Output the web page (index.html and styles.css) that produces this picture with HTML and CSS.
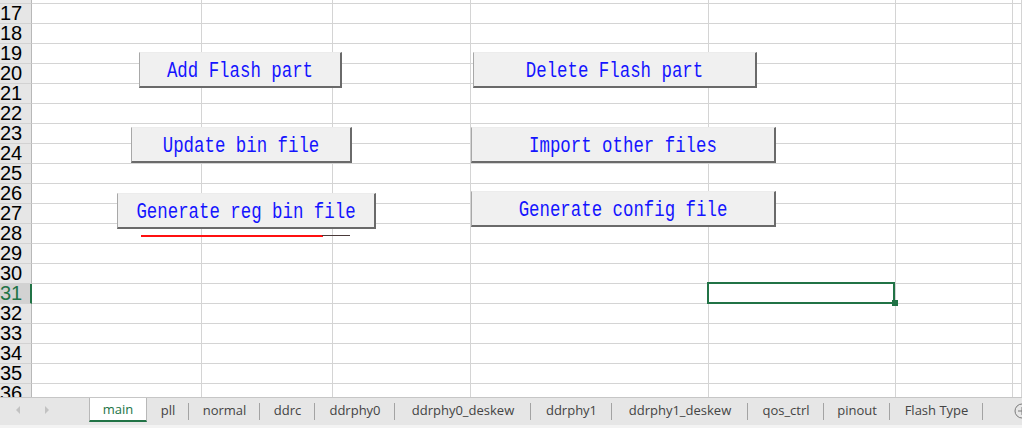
FILE: index.html
```html
<!DOCTYPE html>
<html>
<head>
<meta charset="utf-8">
<link rel="stylesheet" href="styles.css">
</head>
<body>
<div class="app">
  <div class="sheet">
    <div class="row top"><div class="hd"></div><div></div><div></div><div></div><div></div><div></div><div></div><div></div></div>
    <div class="row"><div class="hd">17</div><div></div><div></div><div></div><div></div><div></div><div></div><div></div></div>
    <div class="row"><div class="hd">18</div><div></div><div></div><div></div><div></div><div></div><div></div><div></div></div>
    <div class="row"><div class="hd">19</div><div></div><div></div><div></div><div></div><div></div><div></div><div></div></div>
    <div class="row"><div class="hd">20</div><div></div><div></div><div></div><div></div><div></div><div></div><div></div></div>
    <div class="row"><div class="hd">21</div><div></div><div></div><div></div><div></div><div></div><div></div><div></div></div>
    <div class="row"><div class="hd">22</div><div></div><div></div><div></div><div></div><div></div><div></div><div></div></div>
    <div class="row"><div class="hd">23</div><div></div><div></div><div></div><div></div><div></div><div></div><div></div></div>
    <div class="row"><div class="hd">24</div><div></div><div></div><div></div><div></div><div></div><div></div><div></div></div>
    <div class="row"><div class="hd">25</div><div></div><div></div><div></div><div></div><div></div><div></div><div></div></div>
    <div class="row"><div class="hd">26</div><div></div><div></div><div></div><div></div><div></div><div></div><div></div></div>
    <div class="row"><div class="hd">27</div><div></div><div></div><div></div><div></div><div></div><div></div><div></div></div>
    <div class="row"><div class="hd">28</div><div></div><div></div><div></div><div></div><div></div><div></div><div></div></div>
    <div class="row"><div class="hd">29</div><div></div><div></div><div></div><div></div><div></div><div></div><div></div></div>
    <div class="row"><div class="hd">30</div><div></div><div></div><div></div><div></div><div></div><div></div><div></div></div>
    <div class="row"><div class="hd sel">31</div><div></div><div></div><div></div><div></div><div class="cell-sel"></div><div></div><div></div></div>
    <div class="row"><div class="hd">32</div><div></div><div></div><div></div><div></div><div></div><div></div><div></div></div>
    <div class="row"><div class="hd">33</div><div></div><div></div><div></div><div></div><div></div><div></div><div></div></div>
    <div class="row"><div class="hd">34</div><div></div><div></div><div></div><div></div><div></div><div></div><div></div></div>
    <div class="row"><div class="hd">35</div><div></div><div></div><div></div><div></div><div></div><div></div><div></div></div>
    <div class="row"><div class="hd">36</div><div></div><div></div><div></div><div></div><div></div><div></div><div></div></div>

    <div class="shapes">
      <div class="btn b-add"><span>Add Flash part</span></div>
      <div class="btn b-del"><span>Delete Flash part</span></div>
      <div class="btn b-upd"><span>Update bin file</span></div>
      <div class="btn b-imp"><span>Import other files</span></div>
      <div class="btn b-gen"><span>Generate reg bin file</span></div>
      <div class="btn b-cfg"><span>Generate config file</span></div>
      <div class="ink ink-red"></div>
      <div class="ink ink-dark"></div>
    </div>
  </div>

  <div class="tabbar">
    <div class="nav">
      <svg class="arr" width="6" height="8" viewBox="0 0 6 8"><path d="M5 0 L1 4 L5 8 Z" fill="#c2c2c2"/></svg>
      <svg class="arr" width="6" height="8" viewBox="0 0 6 8"><path d="M1 0 L5 4 L1 8 Z" fill="#c2c2c2"/></svg>
    </div>
    <div class="tab active t-main">main</div>
    <div class="tab t-pll">pll</div>
    <div class="tab t-normal">normal</div>
    <div class="tab t-ddrc">ddrc</div>
    <div class="tab t-phy0">ddrphy0</div>
    <div class="tab t-desk0">ddrphy0_deskew</div>
    <div class="tab t-phy1">ddrphy1</div>
    <div class="tab t-desk1">ddrphy1_deskew</div>
    <div class="tab t-qos">qos_ctrl</div>
    <div class="tab t-pinout">pinout</div>
    <div class="tab t-flash">Flash Type</div>
    <svg class="add" width="16" height="16" viewBox="0 0 16 16"><circle cx="8" cy="8" r="7" fill="none" stroke="#7a7a7a" stroke-width="1"/><path d="M4 8 H12 M8 4 V12" stroke="#7a7a7a" stroke-width="1"/></svg>
  </div>
</div>
</body>
</html>
```

FILE: styles.css
```css
html, body {
  margin: 0;
  padding: 0;
  background: #ffffff;
}
body {
  width: 1022px;
  height: 428px;
  overflow: hidden;
}
.app {
  display: flex;
  flex-direction: column;
  width: 1022px;
  height: 428px;
}
.sheet {
  position: relative;
  height: 397px;
  overflow: hidden;
  flex: none;
}
.row {
  display: grid;
  grid-template-columns: 32px 170px 131px 138px 238px 187px 117px 1fr;
  height: 20px;
}
.row.top {
  height: 4px;
}
.row > div {
  box-sizing: border-box;
  border-right: 1px solid #d4d4d4;
  border-bottom: 1px solid #d4d4d4;
}
.row > .hd {
  background: #e6e6e6;
  border-right-color: #b8b8b8;
  border-bottom-color: #d2d2d2;
  font-family: "Liberation Sans", Arial, sans-serif;
  font-size: 20px;
  line-height: 19px;
  color: #000;
  white-space: nowrap;
}
.row.top > .hd {
  overflow: hidden;
}
.row > .hd.sel {
  background: #d2d2d2;
  color: #217346;
  border-right: 2px solid #217346;
}
.row > .cell-sel {
  position: relative;
}
.cell-sel::after {
  content: "";
  position: absolute;
  left: -2px;
  top: -2px;
  right: 0;
  bottom: -1px;
  border: 2px solid #217346;
}
.cell-sel::before {
  content: "";
  position: absolute;
  right: -3px;
  bottom: -3px;
  width: 6px;
  height: 6px;
  background: #217346;
  z-index: 1;
}

.shapes {
  position: absolute;
  inset: 0;
}
.btn {
  position: absolute;
  box-sizing: border-box;
  height: 36px;
  display: flex;
  align-items: center;
  justify-content: center;
  background: #f0f0f0;
  border-top: 1px solid #ececec;
  border-left: 1px solid #a8a8a8;
  border-right: 2px solid #6a6a6a;
  border-bottom: 2px solid #6a6a6a;
  font-family: "Liberation Mono", "Courier New", monospace;
  font-size: 17.4px;
  color: #1414ff;
  white-space: nowrap;
}
.btn span {
  display: inline-block;
  transform: scaleY(1.22);
  padding-top: 3px;
}
.b-add { left: 139px; top: 52px; width: 203px; }
.b-del { left: 473px; top: 52px; width: 284px; }
.b-upd { left: 131px; top: 127px; width: 221px; }
.b-imp { left: 471px; top: 127px; width: 305px; }
.b-gen { left: 117px; top: 193px; width: 259px; }
.b-cfg { left: 471px; top: 191px; width: 305px; }

.ink {
  position: absolute;
  height: 1px;
}
.ink-red {
  left: 141px;
  top: 235px;
  width: 182px;
  height: 2px;
  background: #ff1010;
}
.ink-dark {
  left: 322px;
  top: 235px;
  width: 28px;
  background: #4a3a3a;
}

.tabbar {
  flex: none;
  box-sizing: border-box;
  height: 31px;
  border-top: 1px solid #c6c6c6;
  border-bottom: 3px solid #f3f3f3;
  background: #e6e6e6;
  display: flex;
  align-items: flex-start;
  font-family: "Open Sans", "Noto Sans", sans-serif;
  font-size: 13px;
  color: #444;
}
.nav {
  flex: none;
  width: 89px;
  height: 24px;
  display: flex;
  align-items: center;
  gap: 23px;
  padding-left: 15px;
  box-sizing: border-box;
}
.tab {
  flex: none;
  position: relative;
  box-sizing: border-box;
  height: 24px;
  padding-bottom: 1px;
  display: flex;
  align-items: center;
  justify-content: center;
  white-space: nowrap;
}
.tab::after {
  content: "";
  position: absolute;
  right: 0;
  top: 5px;
  width: 1px;
  height: 17px;
  background: #a3a3a3;
}
.tab.active {
  background: #ffffff;
  color: #217346;
  border-left: 1px solid #b8b8b8;
  border-right: 1px solid #b8b8b8;
  border-bottom: 2px solid #217346;
  padding-bottom: 0;
}
.tab.active::after {
  display: none;
}
.t-main { width: 58px; }
.t-pll { width: 42px; }
.t-normal { width: 71px; }
.t-ddrc { width: 55px; }
.t-phy0 { width: 80px; }
.t-desk0 { width: 136px; }
.t-phy1 { width: 81px; }
.t-desk1 { width: 136px; }
.t-qos { width: 76px; }
.t-pinout { width: 66px; }
.t-flash { width: 93px; }
.add {
  flex: none;
  margin-left: 31px;
  margin-top: 5px;
}
```
